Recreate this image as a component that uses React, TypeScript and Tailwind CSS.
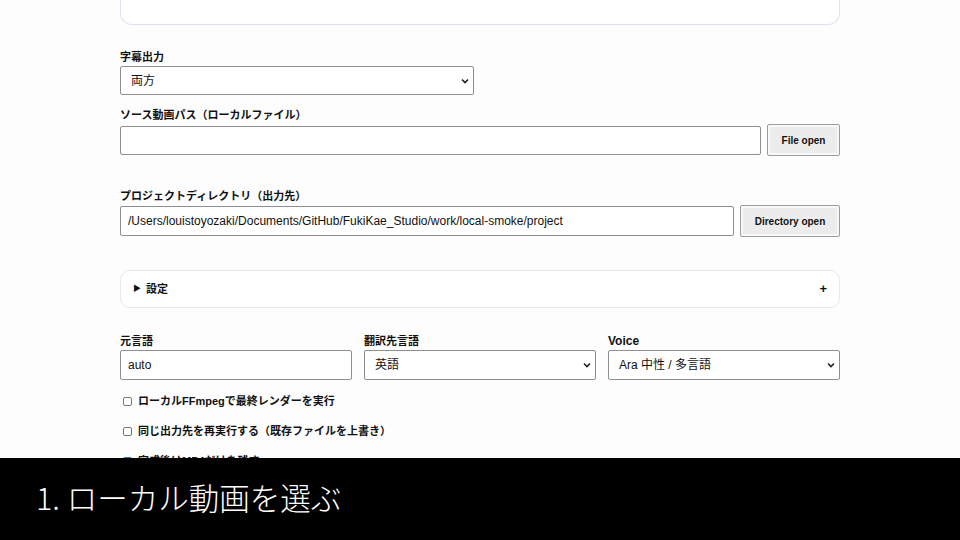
import React from "react";

const font = { fontFamily: '"Liberation Sans", "Noto Sans CJK JP", sans-serif' };

function Chevron() {
  return (
    <svg width="8" height="6" viewBox="0 0 8 6" className="absolute right-[4px] top-1/2 -translate-y-1/2">
      <path d="M1 1.5 L4 4.5 L7 1.5" fill="none" stroke="#222" strokeWidth="1.6" />
    </svg>
  );
}

function Select({ value, w, h = "h-[30px]" }: { value: string; w: string; h?: string }) {
  return (
    <div className={`relative ${w} ${h} border border-[#8f8f8f] rounded-[2px] bg-white flex items-center pl-[10px] text-[12px] text-[#111]`}>
      {value}
      <Chevron />
    </div>
  );
}

function Label({ children, className = "" }: { children: React.ReactNode; className?: string }) {
  return <div className={`text-[11px] font-bold leading-[14px] text-[#111] mb-[2px] ${className}`}>{children}</div>;
}

function Btn({ children, w }: { children: React.ReactNode; w: string }) {
  return (
    <div className={`${w} h-[32px] shrink-0 border border-[#9c9c9c] rounded-[2px] bg-[#ececec] shadow-[inset_0_0_0_2px_#f8f8f8] flex items-center justify-center text-[10px] font-bold text-[#111]`}>
      {children}
    </div>
  );
}

function Check({ checked, children }: { checked?: boolean; children: React.ReactNode }) {
  return (
    <div className="flex items-center h-[16px] pl-[3px] gap-[6px] text-[11px] font-bold text-[#111]">
      {checked ? (
        <span className="w-[9px] h-[9px] rounded-[2px] bg-[#3c6bdc] flex items-center justify-center">
          <svg width="7" height="7" viewBox="0 0 7 7"><path d="M1 3.6 L2.8 5.3 L6 1.5" fill="none" stroke="#fff" strokeWidth="1.3" /></svg>
        </span>
      ) : (
        <span className="w-[9px] h-[9px] rounded-[2px] border border-[#767676] bg-white" />
      )}
      <span>{children}</span>
    </div>
  );
}

export default function App() {
  return (
    <div className="relative w-[960px] h-[540px] overflow-hidden bg-[#fdfdfd]" style={font}>
      <div className="w-[720px] mx-auto">
        <div className="h-[25px] border border-t-0 border-[#dde2ee] rounded-b-[12px] bg-white" />

        <Label className="mt-[25px]">字幕出力</Label>
        <Select value="両方" w="w-[354px]" h="h-[29px]" />

        <Label className="mt-[13px]">ソース動画パス（ローカルファイル）</Label>
        <div className="flex items-center gap-[6px]">
          <div className="flex-1 h-[29px] border border-[#8f8f8f] rounded-[2px] bg-white" />
          <Btn w="w-[73px]">File open</Btn>
        </div>

        <Label className="mt-[33px]">プロジェクトディレクトリ（出力先）</Label>
        <div className="flex items-center gap-[6px]">
          <div className="flex-1 h-[30px] border border-[#8f8f8f] rounded-[2px] bg-white flex items-center pl-[7px] text-[12px] text-[#111]">
            /Users/louistoyozaki/Documents/GitHub/FukiKae_Studio/work/local-smoke/project
          </div>
          <Btn w="w-[100px]">Directory open</Btn>
        </div>

        <div className="mt-[33px] h-[38px] border border-[#e8e8e8] rounded-[10px] bg-white flex items-center justify-between pl-[12px] pr-[12px] text-[11px] font-bold text-[#111]">
          <div className="flex items-center gap-[5px]">
            <span className="text-[8px]">▶</span>
            <span>設定</span>
          </div>
          <span className="text-[13px]">+</span>
        </div>

        <div className="mt-[26px] grid grid-cols-3 gap-[12px]">
          <div>
            <Label>元言語</Label>
            <div className="h-[30px] border border-[#8f8f8f] rounded-[2px] bg-white flex items-center pl-[7px] text-[12px] text-[#111]">auto</div>
          </div>
          <div>
            <Label>翻訳先言語</Label>
            <Select value="英語" w="w-full" />
          </div>
          <div>
            <Label className="text-[12px]">Voice</Label>
            <Select value="Ara 中性 / 多言語" w="w-full" />
          </div>
        </div>

        <div className="mt-[13px] flex flex-col gap-[14px]">
          <Check>ローカルFFmpegで最終レンダーを実行</Check>
          <Check>同じ出力先を再実行する（既存ファイルを上書き）</Check>
          <Check checked>完成後はMP4だけを残す</Check>
        </div>
      </div>

      <div className="absolute left-0 right-0 bottom-0 h-[82px] bg-black flex items-center pl-[36px]">
        <span className="text-white text-[30.5px] font-light leading-none -mt-[3px]" style={{ fontFamily: '"Noto Sans CJK JP", sans-serif' }}>
          1. ローカル動画を選ぶ
        </span>
      </div>
    </div>
  );
}
